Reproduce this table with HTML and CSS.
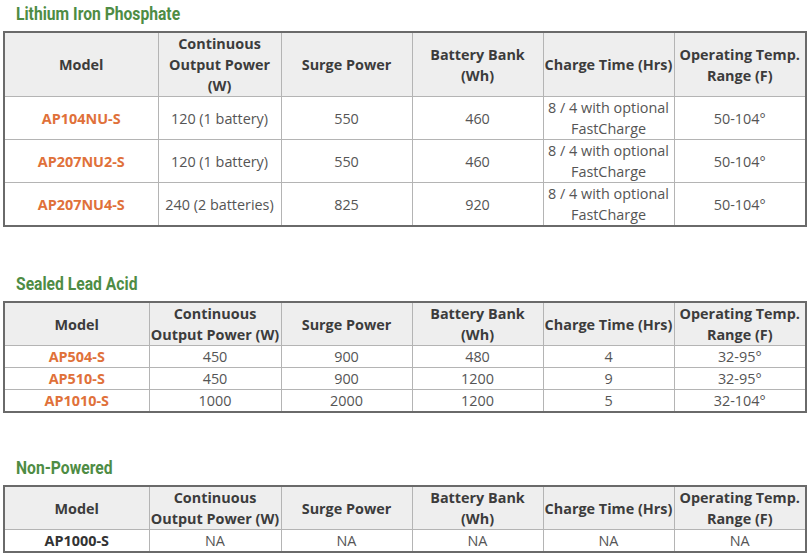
FILE: index.html
```html
<!DOCTYPE html>
<html>
<head>
<meta charset="utf-8">
<link rel="stylesheet" href="styles.css">
</head>
<body>
<div class="page">
  <section class="group group-lfp">
    <h2 class="title"><span>Lithium Iron Phosphate</span></h2>
    <table class="spec spec-a">
      <colgroup><col class="c-model"><col class="c-out"><col class="c-n"><col class="c-n"><col class="c-n"><col class="c-last"></colgroup>
      <tr class="head">
        <th>Model</th><th>Continuous<br>Output Power<br>(W)</th><th>Surge Power</th><th>Battery Bank<br>(Wh)</th><th>Charge Time (Hrs)</th><th>Operating Temp.<br>Range (F)</th>
      </tr>
      <tr><td class="model">AP104NU-S</td><td>120 (1 battery)</td><td>550</td><td>460</td><td>8 / 4 with optional<br>FastCharge</td><td>50-104°</td></tr>
      <tr><td class="model">AP207NU2-S</td><td>120 (1 battery)</td><td>550</td><td>460</td><td>8 / 4 with optional<br>FastCharge</td><td>50-104°</td></tr>
      <tr><td class="model">AP207NU4-S</td><td>240 (2 batteries)</td><td>825</td><td>920</td><td>8 / 4 with optional<br>FastCharge</td><td>50-104°</td></tr>
    </table>
  </section>

  <section class="group group-sla">
    <h2 class="title"><span>Sealed Lead Acid</span></h2>
    <table class="spec spec-b">
      <colgroup><col class="c-model"><col class="c-out"><col class="c-n"><col class="c-n"><col class="c-n"><col class="c-last"></colgroup>
      <tr class="head">
        <th>Model</th><th>Continuous<br>Output Power (W)</th><th>Surge Power</th><th>Battery Bank<br>(Wh)</th><th>Charge Time (Hrs)</th><th>Operating Temp.<br>Range (F)</th>
      </tr>
      <tr><td class="model">AP504-S</td><td>450</td><td>900</td><td>480</td><td>4</td><td>32-95°</td></tr>
      <tr><td class="model">AP510-S</td><td>450</td><td>900</td><td>1200</td><td>9</td><td>32-95°</td></tr>
      <tr><td class="model">AP1010-S</td><td>1000</td><td>2000</td><td>1200</td><td>5</td><td>32-104°</td></tr>
    </table>
  </section>

  <section class="group">
    <h2 class="title"><span>Non-Powered</span></h2>
    <table class="spec spec-b">
      <colgroup><col class="c-model"><col class="c-out"><col class="c-n"><col class="c-n"><col class="c-n"><col class="c-last"></colgroup>
      <tr class="head">
        <th>Model</th><th>Continuous<br>Output Power (W)</th><th>Surge Power</th><th>Battery Bank<br>(Wh)</th><th>Charge Time (Hrs)</th><th>Operating Temp.<br>Range (F)</th>
      </tr>
      <tr><td class="model plain">AP1000-S</td><td>NA</td><td>NA</td><td>NA</td><td>NA</td><td>NA</td></tr>
    </table>
  </section>
</div>
</body>
</html>
```

FILE: styles.css
```css
html, body {
  margin: 0;
  padding: 0;
  background: #ffffff;
}

.page {
  display: flex;
  flex-direction: column;
  padding: 0 0 0 3px;
  font-family: "Open Sans", "Liberation Sans", sans-serif;
  font-size: 14.4px;
  color: #555555;
}

.group {
  display: flex;
  flex-direction: column;
}

.group-lfp { margin-bottom: 43px; }
.group-sla { margin-bottom: 41px; }

.title {
  margin: 0 0 5px 13px;
  height: 26px;
  line-height: 28px;
  font-family: Roboto, "Liberation Sans", sans-serif;
  font-weight: 700;
  font-size: 18px;
  color: #4e8c44;
  white-space: nowrap;
}

.title span {
  display: inline-block;
  transform: scaleX(0.87);
  transform-origin: left center;
}

.spec {
  border-collapse: collapse;
  table-layout: fixed;
  width: 802px;
  border: 2px solid #6a6a6a;
}

.spec th,
.spec td {
  border: 1px solid #b4b4b4;
  padding: 0 1px;
  line-height: 21px;
  text-align: center;
  vertical-align: middle;
  white-space: nowrap;
}

.spec th {
  background: #eeeeee;
  color: #3c3c3c;
  font-weight: 700;
}

.spec td {
  color: #555555;
}

.spec td.model {
  color: #e0713a;
  font-weight: 700;
}

.spec td.model.plain {
  color: #333333;
}

.spec-a .c-model { width: 154px; }
.spec-a .c-out { width: 123px; }
.spec-b .c-model { width: 145px; }
.spec-b .c-out { width: 132px; }
.c-n { width: 131px; }
.c-last { width: 132px; }
```
